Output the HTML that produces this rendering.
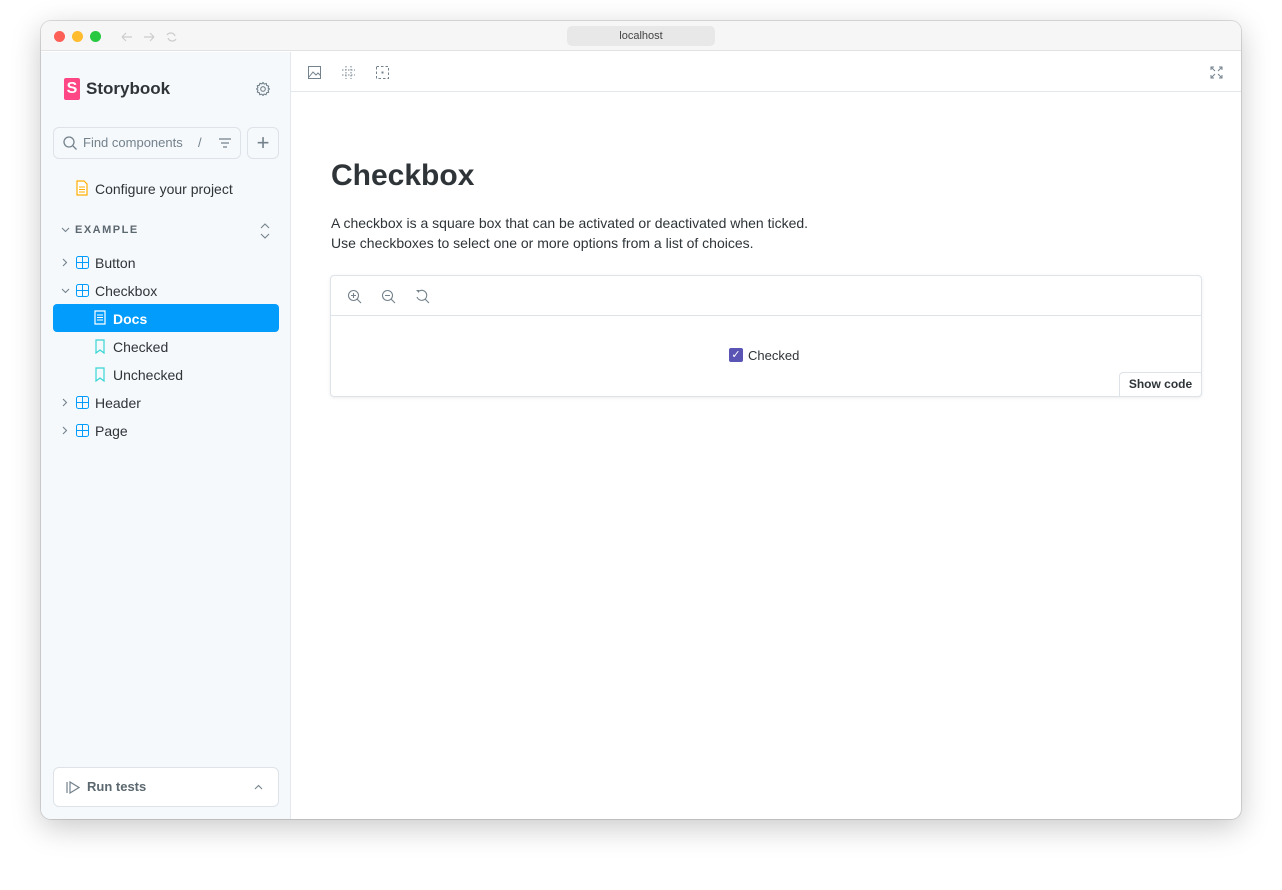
<!DOCTYPE html>
<html><head><meta charset="utf-8"><style>
*{box-sizing:border-box;margin:0;padding:0}
body{width:1282px;height:890px;background:#fff;font-family:"Liberation Sans",sans-serif;position:relative;overflow:hidden}
.win{position:absolute;left:41px;top:21px;width:1200px;height:798px;border-radius:10px;overflow:hidden;box-shadow:0 8px 30px rgba(0,0,0,.22),0 0 0 1px rgba(0,0,0,.12);background:#fff}
.title{height:30px;background:#f6f6f6;border-bottom:1px solid #e2e2e2;position:relative}
.dot{position:absolute;top:10px;width:11px;height:11px;border-radius:50%}
.url{position:absolute;left:526px;top:5px;width:148px;height:20px;background:#e8e8e8;border-radius:5px;font-size:11px;color:#444;text-align:center;line-height:20px}
.side{position:absolute;left:0;top:31px;width:250px;bottom:0;background:#f6f9fc;border-right:1px solid #e3e8ee}
.main{position:absolute;left:250px;top:31px;right:0;bottom:0}
.t{position:absolute;font-size:14px;color:#2e3438}
svg{position:absolute}
</style></head><body>
<div class="win">
<div class="title">
<div class="dot" style="left:13px;background:#fe5f57"></div>
<div class="dot" style="left:31px;background:#febc2e"></div>
<div class="dot" style="left:49px;background:#28c840"></div>
<svg style="left:79px;top:10px" width="60" height="12"><path d="M2 6h10M2 6l4-4M2 6l4 4M24 6h10M34 6l-4-4M34 6l-4 4" fill="none" stroke="#ccc" stroke-width="1.2"/><path d="M47 4a4.5 4.5 0 0 1 8 1M56 8a4.5 4.5 0 0 1-8-1" fill="none" stroke="#ccc" stroke-width="1.2"/></svg>
<div class="url">localhost</div>
</div>
<div class="side">
<div style="position:absolute;left:23px;top:26px;width:16px;height:22px;background:#ff4785;border-radius:2px;color:#fff;font-weight:bold;font-size:16px;text-align:center;line-height:22px">S</div>
<div class="t" style="left:45px;top:27px;font-size:17px;font-weight:bold">Storybook</div>
<svg style="left:214px;top:29px" width="16" height="16" viewBox="0 0 16 16"><circle cx="8" cy="8" r="2.3" fill="none" stroke="#73828c" stroke-width="1.1"/><path d="M8 1.5l1.3 1.6 2-.6.4 2 2 .6-.6 2L14.5 8l-1.4 1.3.6 2-2 .4-.6 2-2-.6L8 14.5l-1.3-1.4-2 .6-.4-2-2-.6.6-2L1.5 8l1.4-1.3-.6-2 2-.4.6-2 2 .6z" fill="none" stroke="#73828c" stroke-width="1.1" stroke-linejoin="round"/></svg>
<div style="position:absolute;left:12px;top:75px;width:188px;height:32px;border:1px solid #dde3e8;border-radius:6px;background:#f6f9fc"></div>
<svg style="left:21px;top:83px" width="16" height="16" viewBox="0 0 16 16"><circle cx="7" cy="7" r="5" fill="none" stroke="#73828c" stroke-width="1.3"/><path d="M11 11l3.5 3.5" stroke="#73828c" stroke-width="1.3"/></svg>
<div class="t" style="left:42px;top:83px;font-size:13px;color:#73828c">Find components</div>
<div class="t" style="left:157px;top:83px;font-size:13px;color:#73828c">/</div>
<svg style="left:177px;top:84px" width="14" height="14"><path d="M1 3h12M3 7h8M5 11h4" stroke="#73828c" stroke-width="1.2"/></svg>
<div style="position:absolute;left:206px;top:75px;width:32px;height:32px;border:1px solid #dde3e8;border-radius:6px;color:#73828c;font-size:22px;text-align:center;line-height:29px">+</div>
<svg style="left:35px;top:128px" width="12" height="16"><path d="M1 1h7l3 3v11H1z" fill="#fff" stroke="#ffae00" stroke-width="1.2"/><path d="M3 7h6M3 9.5h6M3 12h6" stroke="#ffae00"/></svg>
<div class="t" style="left:54px;top:129px">Configure your project</div>
<svg style="left:20px;top:175px" width="9" height="6"><path d="M1 1l3.5 3.5L8 1" fill="none" stroke="#73828c" stroke-width="1.1"/></svg>
<div class="t" style="left:34px;top:172px;font-size:11px;font-weight:bold;color:#5c6870;letter-spacing:1.5px">EXAMPLE</div>
<svg style="left:218px;top:170px" width="12" height="18"><path d="M2 6l4-4 4 4M2 12l4 4 4-4" fill="none" stroke="#73828c" stroke-width="1.1"/></svg>
<div style="position:absolute;left:12px;top:252px;width:226px;height:28px;background:#029cfd;border-radius:4px"></div>
<svg style="left:21px;top:206px" width="6" height="9"><path d="M1 1l3.5 3.5L1 8" fill="none" stroke="#73828c" stroke-width="1.1"/></svg>
<svg style="left:20px;top:236px" width="9" height="6"><path d="M1 1l3.5 3.5L8 1" fill="none" stroke="#73828c" stroke-width="1.1"/></svg>
<svg style="left:21px;top:346px" width="6" height="9"><path d="M1 1l3.5 3.5L1 8" fill="none" stroke="#73828c" stroke-width="1.1"/></svg>
<svg style="left:21px;top:374px" width="6" height="9"><path d="M1 1l3.5 3.5L1 8" fill="none" stroke="#73828c" stroke-width="1.1"/></svg>
<svg style="left:35px;top:204px" width="13" height="13"><rect x=".5" y=".5" width="12" height="12" rx="2" fill="none" stroke="#029cfd"/><path d="M6.5 1v11M1 6.5h11" stroke="#029cfd"/></svg>
<svg style="left:35px;top:232px" width="13" height="13"><rect x=".5" y=".5" width="12" height="12" rx="2" fill="none" stroke="#029cfd"/><path d="M6.5 1v11M1 6.5h11" stroke="#029cfd"/></svg>
<svg style="left:35px;top:344px" width="13" height="13"><rect x=".5" y=".5" width="12" height="12" rx="2" fill="none" stroke="#029cfd"/><path d="M6.5 1v11M1 6.5h11" stroke="#029cfd"/></svg>
<svg style="left:35px;top:372px" width="13" height="13"><rect x=".5" y=".5" width="12" height="12" rx="2" fill="none" stroke="#029cfd"/><path d="M6.5 1v11M1 6.5h11" stroke="#029cfd"/></svg>
<div class="t" style="left:54px;top:203px">Button</div>
<div class="t" style="left:54px;top:231px">Checkbox</div>
<svg style="left:53px;top:258px" width="12" height="15"><path d="M1 1h10v13H1z" fill="none" stroke="#fff" stroke-width="1.2"/><path d="M3 5h6M3 7.5h6M3 10h6" stroke="#fff"/></svg>
<div class="t" style="left:72px;top:259px;color:#fff;font-weight:bold">Docs</div>
<svg style="left:54px;top:287px" width="10" height="15"><path d="M1 1h8v13l-4-3-4 3z" fill="none" stroke="#37d5d3" stroke-width="1.2"/></svg>
<svg style="left:54px;top:315px" width="10" height="15"><path d="M1 1h8v13l-4-3-4 3z" fill="none" stroke="#37d5d3" stroke-width="1.2"/></svg>
<div class="t" style="left:72px;top:287px">Checked</div>
<div class="t" style="left:72px;top:315px">Unchecked</div>
<div class="t" style="left:54px;top:343px">Header</div>
<div class="t" style="left:54px;top:371px">Page</div>
<div style="position:absolute;left:12px;top:715px;width:226px;height:40px;background:#fff;border:1px solid #dde3e8;border-radius:6px"></div>
<svg style="left:25px;top:729px" width="14" height="13"><path d="M1 1v11M4 1l9 5.5L4 12z" fill="none" stroke="#73828c" stroke-width="1.2"/></svg>
<div class="t" style="left:46px;top:727px;font-size:13px;font-weight:bold;color:#5c6870">Run tests</div>
<svg style="left:213px;top:732px" width="9" height="6"><path d="M1 5l3.5-3.5L8 5" fill="none" stroke="#73828c" stroke-width="1.1"/></svg>
</div>
<div class="main">
<div style="position:absolute;left:0;top:0;right:0;height:40px;border-bottom:1px solid #e3e8ee"></div>
<svg style="left:17px;top:14px" width="13" height="13"><rect x=".5" y=".5" width="12" height="12" fill="none" stroke="#73828c"/><path d="M1 11l4-5 3 3 2-2 3 3" fill="none" stroke="#73828c"/></svg>
<svg style="left:51px;top:14px" width="13" height="13"><path d="M4 0v13M9 0v13M0 4h13M0 9h13" stroke="#73828c" stroke-dasharray="1.5 1.5"/></svg>
<svg style="left:85px;top:14px" width="13" height="13"><rect x=".5" y=".5" width="12" height="12" fill="none" stroke="#73828c" stroke-dasharray="2.5 2"/><rect x="5.5" y="5.5" width="2" height="2" fill="#73828c"/></svg>
<svg style="left:919px;top:14px" width="13" height="13"><path d="M1 4V1h3M9 1h3v3M12 9v3H9M4 12H1V9M1 1l4 4M12 1L8 5M12 12L8 8M1 12l4-4" fill="none" stroke="#73828c"/></svg>
<div class="t" style="left:40px;top:107px;font-size:30px;font-weight:bold;color:#2e3438">Checkbox</div>
<div class="t" style="left:40px;top:161px;line-height:20px;color:#2e3438">A checkbox is a square box that can be activated or deactivated when ticked.<br>Use checkboxes to select one or more options from a list of choices.</div>
<div style="position:absolute;left:39px;top:223px;width:872px;height:122px;border:1px solid #dde3e8;border-radius:4px;box-shadow:0 1px 3px rgba(0,0,0,.08)">
<div style="height:40px;border-bottom:1px solid #dde3e8"></div>
<svg style="left:16px;top:13px" width="15" height="15"><circle cx="6.5" cy="6.5" r="5" fill="none" stroke="#73828c" stroke-width="1.1"/><path d="M10 10l4 4M4 6.5h5M6.5 4v5" stroke="#73828c" stroke-width="1.1"/></svg>
<svg style="left:50px;top:13px" width="15" height="15"><circle cx="6.5" cy="6.5" r="5" fill="none" stroke="#73828c" stroke-width="1.1"/><path d="M10 10l4 4M4 6.5h5" stroke="#73828c" stroke-width="1.1"/></svg>
<svg style="left:84px;top:13px" width="15" height="15"><path d="M3 3A5 5 0 1 1 2 8M10 10l4 4" fill="none" stroke="#73828c" stroke-width="1.1"/><path d="M1 1h3v3z" fill="#73828c"/></svg>
<div style="position:absolute;left:398px;top:72px;width:14px;height:14px;background:#5a55b5;border-radius:2px;color:#fff;font-size:11px;text-align:center;line-height:14px">✓</div>
<div class="t" style="left:417px;top:72px;font-size:13px">Checked</div>
<div style="position:absolute;right:-1px;bottom:-1px;width:83px;height:25px;border:1px solid #dde3e8;border-radius:4px 0 4px 0;background:#fff;font-size:12px;font-weight:bold;color:#2e3438;text-align:center;line-height:23px">Show code</div>
</div>
</div>
</div>
</body></html>
